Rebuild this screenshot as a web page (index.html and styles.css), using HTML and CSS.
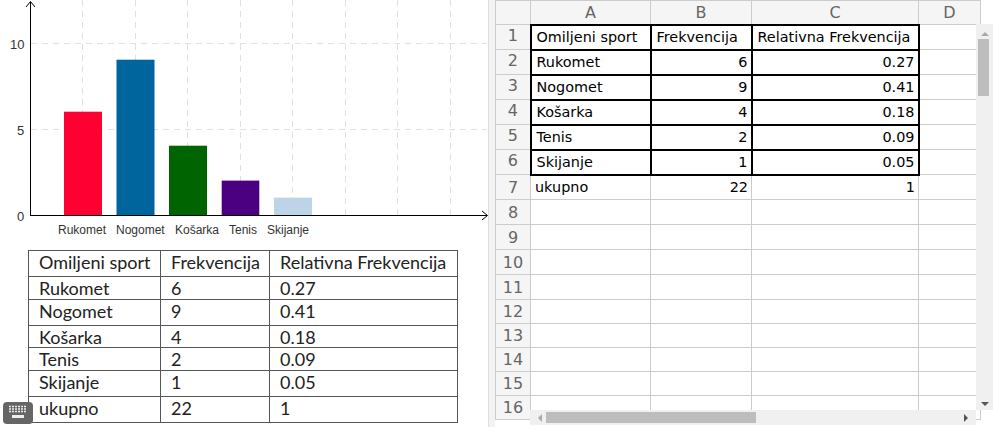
FILE: index.html
```html
<!DOCTYPE html>
<html lang="en">
<head>
<meta charset="UTF-8">
<meta name="viewport" content="width=device-width, initial-scale=1.0">
<title>Omiljeni sport</title>
<link rel="stylesheet" href="styles.css">
</head>
<body>
<div class="app">
    <div class="graphics">
        <svg class="chart" width="488" height="250" viewBox="0 0 488 250">
            <g class="grid">
                <path d="M82.5 0V215M135.5 0V215M187.5 0V215M240.5 0V215M292.5 0V215M345.5 0V215M397.5 0V215M450.5 0V215"/>
                <path d="M31 43.5H487M31 129.5H487"/>
            </g>
            <rect x="64" y="111.7" width="38" height="103.3" fill="#ff0033"/>
            <rect x="116.5" y="59.7" width="38" height="155.3" fill="#00659c"/>
            <rect x="169" y="145.7" width="38" height="69.3" fill="#006400"/>
            <rect x="221.7" y="180.6" width="37.6" height="34.4" fill="#4b0082"/>
            <rect x="274" y="197.6" width="38" height="17.4" fill="#bdd3e7"/>
            <g class="axis">
                <path d="M30.5 216V2M26 7L30.5 1.5L35 7"/>
                <path d="M30 215.5H487M482 211L487.5 215.5L482 220"/>
            </g>
            <g class="ticks">
                <text x="10" y="49">10</text>
                <text x="17" y="135">5</text>
                <text x="17" y="221">0</text>
            </g>
            <g class="labels">
                <text x="58" y="234">Rukomet</text>
                <text x="116" y="234">Nogomet</text>
                <text x="175" y="234">Košarka</text>
                <text x="229" y="234">Tenis</text>
                <text x="267" y="234">Skijanje</text>
            </g>
        </svg>
        <table class="latex">
            <tr class="h26"><td class="c1">Omiljeni sport</td><td class="c2">Frekvencija</td><td class="c3">Relativna Frekvencija</td></tr>
            <tr class="h23"><td>Rukomet</td><td>6</td><td>0.27</td></tr>
            <tr class="h26"><td>Nogomet</td><td>9</td><td>0.41</td></tr>
            <tr class="h22"><td>Košarka</td><td>4</td><td>0.18</td></tr>
            <tr class="h23"><td>Tenis</td><td>2</td><td>0.09</td></tr>
            <tr class="h26"><td>Skijanje</td><td>1</td><td>0.05</td></tr>
            <tr class="h26"><td>ukupno</td><td>22</td><td>1</td></tr>
        </table>
        <div class="keyboard">
            <svg width="22" height="16" viewBox="0 0 22 16">
                <path class="keys" d="M2 1.5H20M2 4H20M2 6.5H20" />
                <rect x="5" y="10" width="12" height="3" fill="#eee"/>
            </svg>
        </div>
    </div>
    <div class="divider"></div>
    <div class="sheet">
        <table class="cells">
            <tr class="head"><th class="corner"></th><th class="col-a">A</th><th class="col-b">B</th><th class="col-c">C</th><th class="col-d">D</th></tr>
            <tr><th class="raised">1</th><td class="box">Omiljeni sport</td><td class="box">Frekvencija</td><td class="box">Relativna Frekvencija</td><td></td></tr>
            <tr><th class="raised">2</th><td class="box">Rukomet</td><td class="box num">6</td><td class="box num">0.27</td><td></td></tr>
            <tr><th class="raised">3</th><td class="box">Nogomet</td><td class="box num">9</td><td class="box num">0.41</td><td></td></tr>
            <tr><th class="raised">4</th><td class="box">Košarka</td><td class="box num">4</td><td class="box num">0.18</td><td></td></tr>
            <tr><th class="raised">5</th><td class="box">Tenis</td><td class="box num">2</td><td class="box num">0.09</td><td></td></tr>
            <tr><th class="raised">6</th><td class="box">Skijanje</td><td class="box num">1</td><td class="box num">0.05</td><td></td></tr>
            <tr><th>7</th><td>ukupno</td><td class="num">22</td><td class="num">1</td><td></td></tr>
            <tr><th>8</th><td></td><td></td><td></td><td></td></tr>
            <tr><th>9</th><td></td><td></td><td></td><td></td></tr>
            <tr><th>10</th><td></td><td></td><td></td><td></td></tr>
            <tr><th>11</th><td></td><td></td><td></td><td></td></tr>
            <tr class="short"><th>12</th><td></td><td></td><td></td><td></td></tr>
            <tr class="short"><th>13</th><td></td><td></td><td></td><td></td></tr>
            <tr class="short"><th>14</th><td></td><td></td><td></td><td></td></tr>
            <tr class="short"><th>15</th><td></td><td></td><td></td><td></td></tr>
            <tr class="short"><th>16</th><td></td><td></td><td></td><td></td></tr>
        </table>
        <div class="vscroll">
            <span class="arrow up"></span>
            <div class="vthumb"></div>
            <span class="arrow down"></span>
        </div>
        <div class="hscroll">
            <span class="arrow left"></span>
            <div class="hthumb"></div>
            <span class="arrow right"></span>
        </div>
    </div>
</div>
</body>
</html>
```

FILE: styles.css
```css
html, body {
    margin: 0;
    padding: 0;
    height: 100%;
    overflow: hidden;
    background: #fff;
}
.app {
    display: flex;
    width: 993px;
    height: 427px;
    overflow: hidden;
}
.graphics {
    position: relative;
    width: 488px;
    flex: none;
}
.divider {
    width: 7px;
    flex: none;
    background: #f3f3f3;
    border-left: 1px solid #ddd;
    box-sizing: border-box;
}

/* chart */
.chart {
    display: block;
}
.grid path {
    fill: none;
    stroke: #e0e0e0;
    stroke-width: 1;
    stroke-dasharray: 6 5;
}
.axis path {
    fill: none;
    stroke: #000;
    stroke-width: 1;
}
.ticks text {
    font-family: "Liberation Sans", Arial, sans-serif;
    font-size: 13px;
    fill: #333;
}
.labels text {
    font-family: "Liberation Sans", Arial, sans-serif;
    font-size: 12px;
    fill: #333;
}

/* table drawn in the graphics view */
.latex {
    margin-left: 28px;
    width: 430px;
    table-layout: fixed;
    border-collapse: collapse;
    font-family: Lato, "Open Sans", sans-serif;
    font-size: 18px;
    color: #222;
}
.latex td {
    border: 1px solid #555;
    padding: 2px 0 0 10px;
    line-height: 19px;
    vertical-align: top;
    white-space: nowrap;
    overflow: hidden;
}
.latex .c1 {
    width: 121px;
}
.latex .c2 {
    width: 98px;
}
.h26 {
    height: 26px;
}
.h23 {
    height: 23px;
}
.h22 {
    height: 22px;
}
.keyboard {
    position: absolute;
    left: 3px;
    top: 402px;
    width: 30px;
    height: 22px;
    background: #666;
    border-radius: 4px;
    display: flex;
    align-items: center;
    justify-content: center;
}
.keys {
    fill: none;
    stroke: #eee;
    stroke-width: 1.5;
    stroke-dasharray: 2 1;
}

/* spreadsheet */
.sheet {
    position: relative;
    flex: 1;
    overflow: hidden;
}
.cells {
    table-layout: fixed;
    width: 480px;
    border-collapse: collapse;
    font-family: "DejaVu Sans", sans-serif;
    font-size: 14.4px;
    color: #000;
}
.cells tr {
    height: 25px;
}
.cells tr.head {
    height: 24px;
}
.cells tr.short {
    height: 24px;
}
.cells th {
    background: #f5f5f5;
    border: 1px solid #ccc;
    color: #666;
    font-weight: normal;
    font-size: 16px;
    padding: 0;
}
.cells th.raised {
    padding-bottom: 3px;
}
.cells td {
    border: 1px solid #ccc;
    padding: 0 3px 0 4px;
    white-space: nowrap;
    overflow: hidden;
}
.cells td.box {
    border: 2px solid #000;
    padding-left: 5px;
}
.cells td.num {
    text-align: right;
}
.corner {
    width: 34px;
}
.col-a {
    width: 119px;
}
.col-b {
    width: 100px;
}
.col-c {
    width: 166px;
}
.col-d {
    width: 61px;
}

/* scrollbars */
.vscroll {
    position: absolute;
    left: 481px;
    top: 24px;
    width: 17px;
    height: 386px;
    background: #f0f0f0;
    display: flex;
    flex-direction: column;
    align-items: center;
    justify-content: space-between;
    padding: 8px 0 4px;
    box-sizing: border-box;
}
.vthumb {
    position: absolute;
    left: 2px;
    top: 15px;
    width: 11px;
    height: 57px;
    background: #bdbdbd;
}
.hscroll {
    position: absolute;
    left: 35px;
    top: 410px;
    width: 446px;
    height: 15px;
    background: #f0f0f0;
    display: flex;
    align-items: center;
    justify-content: space-between;
    padding: 0 8px;
    box-sizing: border-box;
}
.hthumb {
    position: absolute;
    left: 16px;
    top: 2px;
    width: 210px;
    height: 11px;
    background: #bdbdbd;
}
.arrow {
    width: 0;
    height: 0;
    border: 4px solid transparent;
}
.arrow.up {
    border-top: 0;
    border-bottom: 4px solid #aaa;
}
.arrow.down {
    border-bottom: 0;
    border-top: 4px solid #555;
}
.arrow.left {
    border-left: 0;
    border-right: 4px solid #aaa;
}
.arrow.right {
    border-right: 0;
    border-left: 4px solid #555;
}
```
